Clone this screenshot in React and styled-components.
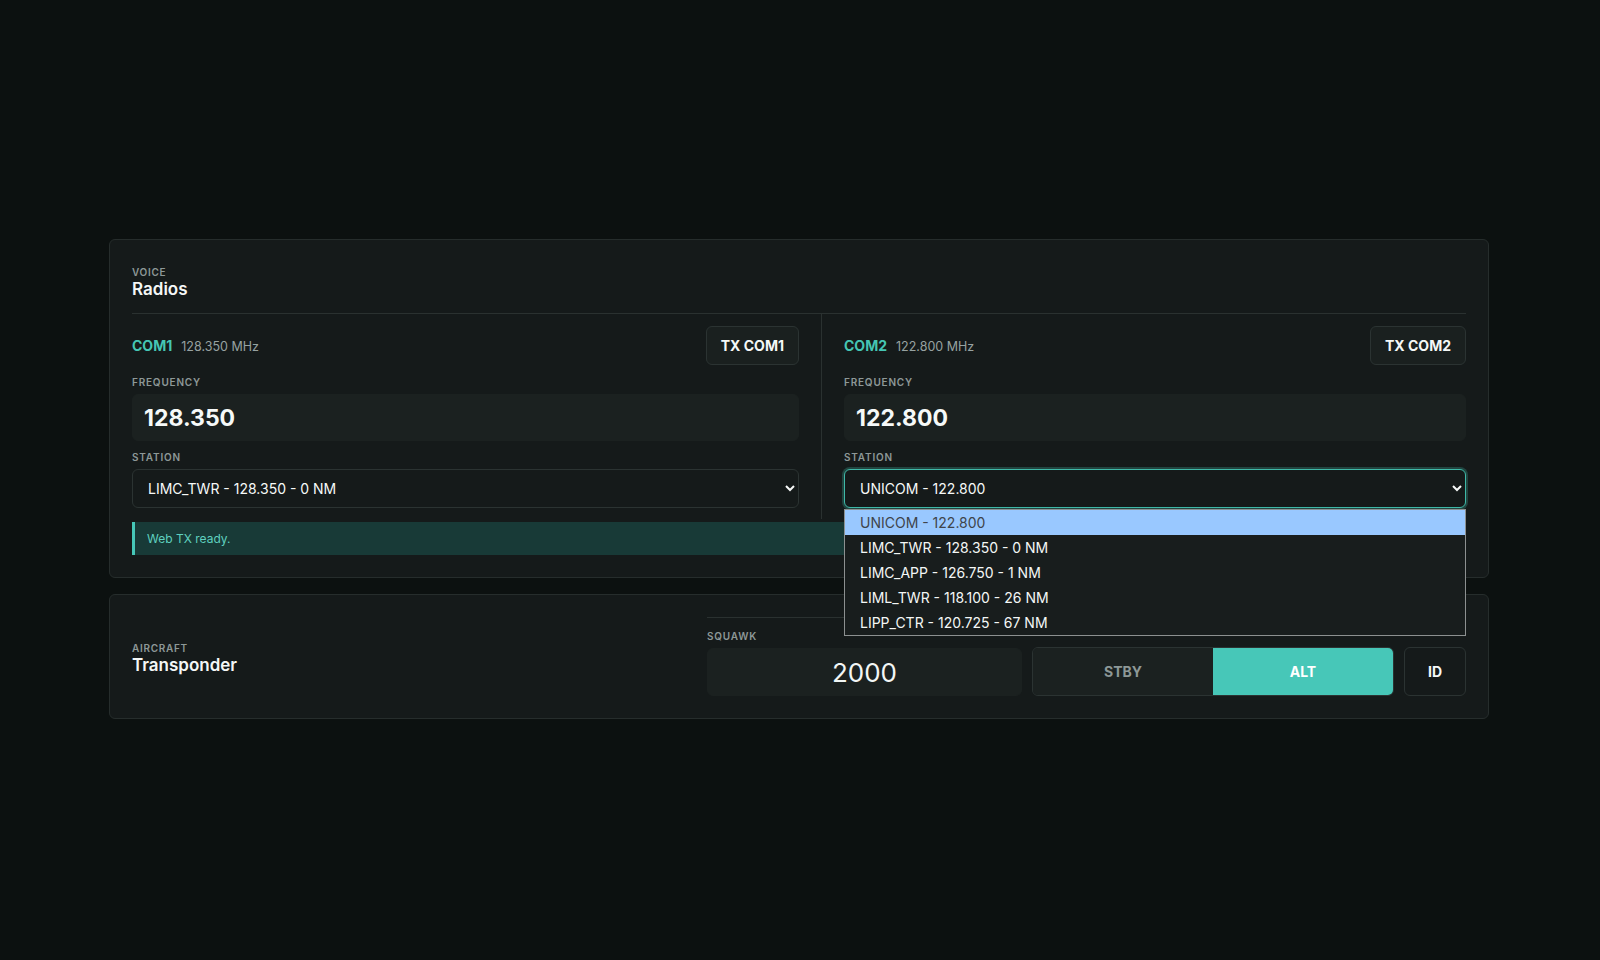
import React from 'react';
import styled, { createGlobalStyle } from 'styled-components';

const GlobalStyle = createGlobalStyle`
  html, body {
    margin: 0;
    padding: 0;
    background: #0c1110;
    color-scheme: dark;
  }
  body {
    font-family: Inter, 'Noto Sans', 'Liberation Sans', sans-serif;
    color: #eef3f2;
  }
  * {
    box-sizing: border-box;
  }
`;

const stations = [
  'UNICOM - 122.800',
  'LIMC_TWR - 128.350 - 0 NM',
  'LIMC_APP - 126.750 - 1 NM',
  'LIML_TWR - 118.100 - 26 NM',
  'LIPP_CTR - 120.725 - 67 NM',
];

const radios = [
  { id: 'COM1', mhz: '128.350', station: 'LIMC_TWR - 128.350 - 0 NM' },
  { id: 'COM2', mhz: '122.800', station: 'UNICOM - 122.800', open: true },
];

export default function App() {
  return (
    <>
      <GlobalStyle />
      <Page>
        <Stack>
          <Panel>
            <Header>
              <Eyebrow>Voice</Eyebrow>
              <Title>Radios</Title>
            </Header>
            <Columns>
              {radios.map((r, i) => (
                <Column key={r.id} $divided={i > 0}>
                  <ComRow>
                    <ComName>
                      <ComId>{r.id}</ComId>
                      <ComMhz>{r.mhz} MHz</ComMhz>
                    </ComName>
                    <Button>TX {r.id}</Button>
                  </ComRow>
                  <FieldLabel>Frequency</FieldLabel>
                  <FreqInput defaultValue={r.mhz} />
                  <FieldLabel>Station</FieldLabel>
                  <SelectWrap>
                    <Select defaultValue={r.station} $focused={r.open}>
                      {stations.map((s) => (
                        <option key={s}>{s}</option>
                      ))}
                    </Select>
                    {r.open && (
                      <OptionList>
                        {stations.map((s) => (
                          <OptionItem key={s} $active={s === r.station}>
                            {s}
                          </OptionItem>
                        ))}
                      </OptionList>
                    )}
                  </SelectWrap>
                </Column>
              ))}
            </Columns>
            <Notice>Web TX ready.</Notice>
          </Panel>

          <Panel>
            <TransponderRow>
              <SideHeading>
                <Eyebrow>Aircraft</Eyebrow>
                <Title>Transponder</Title>
              </SideHeading>
              <Controls>
                <Squawk>
                  <FieldLabel>Squawk</FieldLabel>
                  <SquawkInput defaultValue="2000" />
                </Squawk>
                <Segmented>
                  <Segment>STBY</Segment>
                  <Segment $active>ALT</Segment>
                </Segmented>
                <IdButton>ID</IdButton>
              </Controls>
            </TransponderRow>
          </Panel>
        </Stack>
      </Page>
    </>
  );
}

const Page = styled.main`
  min-height: 100vh;
  display: flex;
  align-items: center;
  justify-content: center;
  padding-right: 2px;
`;

const Stack = styled.div`
  width: 1380px;
  display: flex;
  flex-direction: column;
  gap: 16px;
  margin-top: -2px;
`;

const Panel = styled.section`
  background: #151a1a;
  border: 1px solid #262d2c;
  border-radius: 6px;
  padding: 22px;
`;

const Header = styled.header`
  padding: 3px 0 13px;
  border-bottom: 1px solid #2a3130;
`;

const SideHeading = styled.div`
  padding-top: 3px;
`;

const Eyebrow = styled.div`
  font-size: 10px;
  line-height: 14px;
  font-weight: 600;
  letter-spacing: 0.07em;
  text-transform: uppercase;
  color: #8d9897;
`;

const Title = styled.h2`
  margin: 0;
  font-size: 17px;
  line-height: 21px;
  font-weight: 600;
  color: #f4f7f6;
`;

const Columns = styled.div`
  display: grid;
  grid-template-columns: 689px 1fr;
`;

const Column = styled.div`
  display: flex;
  flex-direction: column;
  padding: 12px ${(p) => (p.$divided ? '0' : '22px')} 11px ${(p) => (p.$divided ? '22px' : '0')};
  border-left: ${(p) => (p.$divided ? '1px solid #2a3130' : 'none')};
`;

const ComRow = styled.div`
  display: flex;
  align-items: center;
  justify-content: space-between;
  margin-bottom: 11px;
`;

const ComName = styled.div`
  display: flex;
  align-items: baseline;
  gap: 9px;
`;

const ComId = styled.span`
  font-size: 14px;
  font-weight: 700;
  color: #45c6b4;
`;

const ComMhz = styled.span`
  font-size: 12.5px;
  color: #97a2a1;
`;

const Button = styled.button`
  height: 39px;
  padding: 0 14px;
  font-family: inherit;
  font-size: 14px;
  font-weight: 700;
  color: #f5f8f7;
  background: #1a201f;
  border: 1px solid #2b3332;
  border-radius: 6px;
`;

const FieldLabel = styled.label`
  display: block;
  font-size: 10px;
  line-height: 12px;
  font-weight: 600;
  letter-spacing: 0.08em;
  text-transform: uppercase;
  color: #8d9897;
  margin-bottom: 6px;
`;

const FreqInput = styled.input`
  height: 47px;
  padding: 0 11px;
  margin-bottom: 10px;
  font-family: inherit;
  font-size: 23px;
  font-weight: 700;
  color: #f6f9f8;
  background: #1b2120;
  border: 1px solid #1b2120;
  border-radius: 6px;
  outline: none;
`;

const SelectWrap = styled.div`
  position: relative;
`;

const Select = styled.select`
  width: 100%;
  height: 39px;
  padding: 0 8px 0 11px;
  font-family: inherit;
  font-size: 14px;
  color: #f6f9f8;
  background: #151a1a;
  border: 1px solid ${(p) => (p.$focused ? '#3fb8a7' : '#2b3332')};
  box-shadow: ${(p) => (p.$focused ? '0 0 0 2px rgba(63, 184, 167, 0.28)' : 'none')};
  border-radius: 6px;
  outline: none;
`;

const OptionList = styled.ul`
  position: absolute;
  top: 100%;
  left: 0;
  right: 0;
  margin: 1px 0 0;
  padding: 0;
  list-style: none;
  background: #181d1d;
  border: 1px solid #8c9090;
  z-index: 10;
`;

const OptionItem = styled.li`
  height: 25px;
  line-height: 25px;
  padding-left: 15px;
  font-size: 14px;
  color: ${(p) => (p.$active ? '#3f444a' : '#f4f7f6')};
  background: ${(p) => (p.$active ? '#99c8ff' : 'transparent')};
`;

const Notice = styled.div`
  margin-top: 3px;
  height: 33px;
  display: flex;
  align-items: center;
  padding-left: 12px;
  font-size: 12px;
  color: #5fd0bf;
  background: #183a37;
  border-left: 3px solid #46c7b8;
`;

const TransponderRow = styled.div`
  display: flex;
  align-items: center;
  justify-content: space-between;
`;

const Controls = styled.div`
  width: 759px;
  display: grid;
  grid-template-columns: 315px 362px 1fr;
  column-gap: 10px;
  align-items: end;
  padding-top: 12px;
  border-top: 1px solid #2a3130;
`;

const Squawk = styled.div`
  display: flex;
  flex-direction: column;
`;

const SquawkInput = styled.input`
  height: 48px;
  width: 100%;
  text-align: center;
  font-family: inherit;
  font-size: 26px;
  font-weight: 400;
  color: #f2f6f5;
  background: #1b2120;
  border: 1px solid #1b2120;
  border-radius: 6px;
  outline: none;
`;

const Segmented = styled.div`
  height: 49px;
  display: grid;
  grid-template-columns: 1fr 1fr;
  border: 1px solid #2b3332;
  border-radius: 6px;
  overflow: hidden;
`;

const Segment = styled.button`
  font-family: inherit;
  font-size: 14px;
  font-weight: 700;
  border: none;
  color: ${(p) => (p.$active ? '#ffffff' : '#8d9897')};
  background: ${(p) => (p.$active ? '#47c7b8' : '#1b2120')};
`;

const IdButton = styled.button`
  height: 49px;
  font-family: inherit;
  font-size: 14px;
  font-weight: 700;
  color: #f5f8f7;
  background: #151a1a;
  border: 1px solid #2b3332;
  border-radius: 6px;
`;
